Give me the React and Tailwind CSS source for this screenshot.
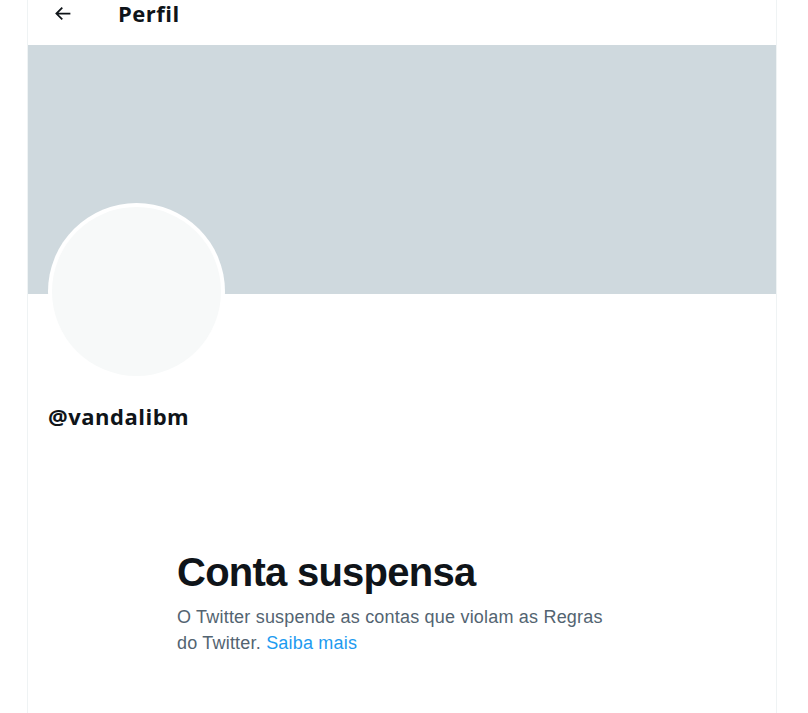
import React from "react";

const ArrowLeft = () => (
  <svg viewBox="0 0 24 24" className="w-[21px] h-[21px] fill-[#0f1419]">
    <path d="M7.414 13l5.043 5.04-1.414 1.42L3.586 12l7.457-7.46 1.414 1.42L7.414 11H21v2H7.414z" />
  </svg>
);

const App = () => {
  return (
    <div
      className="min-h-screen bg-white"
      style={{ fontFamily: '"Liberation Sans", Arial, sans-serif' }}
    >
      <main className="ml-[27px] w-[750px] min-h-[713px] border-x border-[#eff3f4] bg-white">
        {/* Header */}
        <header className="h-[45px]">
          <div className="flex items-center h-[26px] pl-[23px]">
            <div className="w-[22px] flex justify-center">
              <ArrowLeft />
            </div>
            <h2 className="ml-[45px] font-['Open_Sans'] text-[22px] font-bold text-[#0f1419] leading-6 tracking-[0.5px]">
              Perfil
            </h2>
          </div>
        </header>

        {/* Banner */}
        <div className="h-[249px] bg-[#cfd9de]" />

        {/* Avatar + name */}
        <div className="px-[20px]">
          <div className="-mt-[91px] w-[177px] h-[177px] rounded-full bg-white p-[4px]">
            <div className="w-full h-full rounded-full bg-[#f7f9f9]" />
          </div>
          <div className="mt-[24px] font-['Open_Sans'] text-[22px] font-bold text-[#0f1419] leading-6 tracking-[0.5px]">
            @vandalibm
          </div>
        </div>

        {/* Suspended notice */}
        <section className="ml-[149px] w-[444px] mt-[122px]">
          <h1 className="text-[40px] font-extrabold text-[#0f1419] leading-[44px] tracking-[-0.75px]">
            Conta suspensa
          </h1>
          <p className="mt-[10px] text-[18px] leading-[26px] text-[#536471] tracking-[0.2px]">
            O Twitter suspende as contas que violam as Regras do Twitter.{" "}
            <span className="text-[#1d9bf0]">Saiba mais</span>
          </p>
        </section>
      </main>
    </div>
  );
};

export default App;
